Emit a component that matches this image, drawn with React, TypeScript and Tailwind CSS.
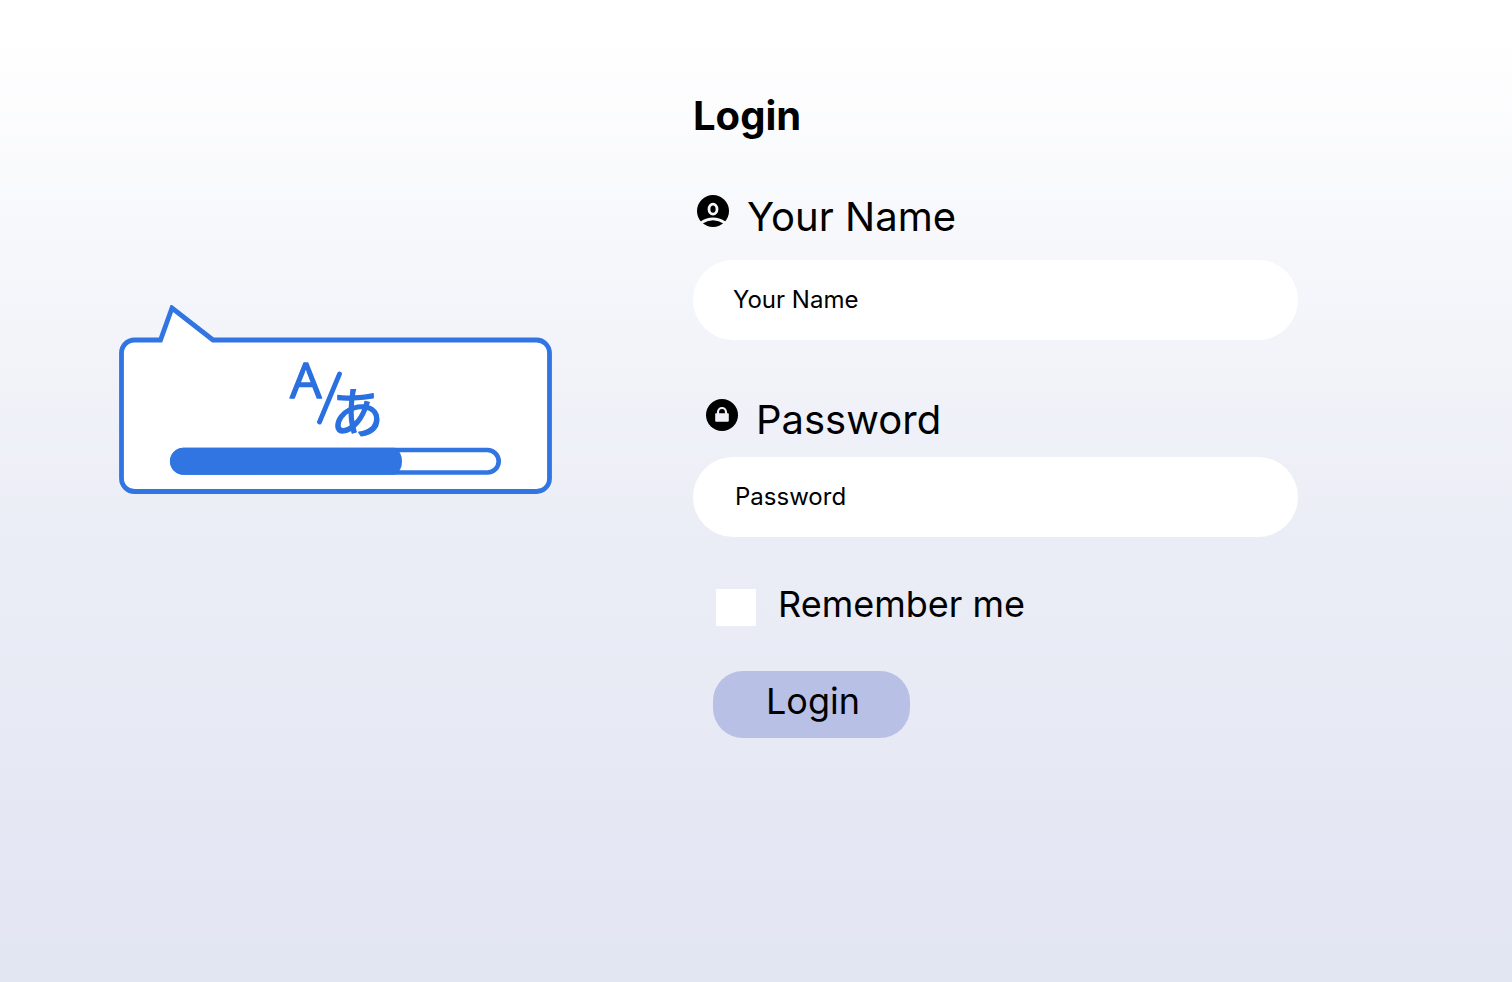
function SpeechBubble() {
  return (
    <svg viewBox="0 0 433 190" className="block w-full" role="img" aria-label="Language selection progress">
      <path
        d="M15.500 35 H41.500 L53 3 L94 35 H417 A13 13 0 0 1 430.500 48 V173.500 A13 13 0 0 1 417 186.500 H15.500 A13 13 0 0 1 2.500 173.500 V48 A13 13 0 0 1 15.500 35 Z"
        fill="#fff"
        stroke="#3075e2"
        strokeWidth="4.800"
      />
      <text
        x="171"
        y="93"
        fontSize="50"
        fill="#2a70e0"
        stroke="#2a70e0"
        strokeWidth="1.400"
        strokeLinejoin="round"
        className="font-['Open_Sans',sans-serif]"
      >
        A
      </text>
      <path d="M220.500 69 L200.500 117" stroke="#2a70e0" strokeWidth="4.800" strokeLinecap="round" />
      <text
        x="211"
        y="128"
        fontSize="54"
        fill="#2a70e0"
        stroke="#2a70e0"
        strokeWidth="1.400"
        strokeLinejoin="round"
        className="font-['Noto_Sans_CJK_JP',sans-serif]"
      >
        あ
      </text>
      <rect x="53.300" y="145" width="326.400" height="22.500" rx="11.250" fill="#fff" stroke="#3075e2" strokeWidth="4.600" />
      <path d="M64.500 142.700 H276 Q283 147 283 156.200 Q283 165.500 276 169.800 H64.500 A13.500 13.500 0 0 1 64.500 142.700 Z" fill="#3075e2" />
    </svg>
  );
}

function UserIcon() {
  return (
    <svg viewBox="0 0 32 32" className="mt-0.5 size-8 shrink-0" aria-hidden="true">
      <circle cx="16" cy="16" r="16" />
      <ellipse cx="16" cy="14.200" rx="4" ry="5" fill="none" stroke="#f7f8fc" strokeWidth="2.800" />
      <path d="M4 27.800 Q16 20 28 27.800" fill="none" stroke="#f7f8fc" strokeWidth="2.800" />
    </svg>
  );
}

function LockIcon() {
  return (
    <svg viewBox="0 0 32 32" className="mt-[3px] size-8 shrink-0" aria-hidden="true">
      <circle cx="16" cy="16" r="16" />
      <path d="M12 15 V13 A4 4 0 0 1 20 13 V15" fill="none" stroke="#f0f1f8" strokeWidth="2.200" />
      <rect x="9.200" y="14.200" width="13.600" height="8.600" rx="1" fill="#f0f1f8" />
    </svg>
  );
}

export default function App() {
  return (
    <main className="grid min-h-screen grid-cols-[433fr_605fr] items-start gap-[141px] bg-linear-to-b from-white from-3% via-[#ebedf6] via-55% to-[#e2e5f2] pr-[214px] pl-[119px] font-['Inter',sans-serif] text-black">
      <div className="pt-[305px]">
        <SpeechBubble />
      </div>
      <form className="flex flex-col items-start pt-[92px]" onSubmit={(e) => e.preventDefault()}>
        <h1 className="text-[40px] leading-[48px] font-bold">Login</h1>

        <label htmlFor="name" className="mt-[53px] flex items-start gap-[18px] pl-1 text-[40px] leading-[48px]">
          <UserIcon />
          Your Name
        </label>
        <input
          id="name"
          type="text"
          placeholder="Your Name"
          className="mt-[19px] h-20 w-full rounded-full bg-white px-10 pb-0.5 text-2xl placeholder:text-black"
        />

        <label htmlFor="password" className="mt-14 flex items-start gap-[18px] pl-[13px] text-[40px] leading-[48px]">
          <LockIcon />
          Password
        </label>
        <input
          id="password"
          type="password"
          placeholder="Password"
          className="mt-[13px] h-20 w-full rounded-full bg-white px-[42px] pb-0.5 text-2xl placeholder:text-black"
        />

        <div className="mt-[45px] flex items-end gap-[22px] pl-[23px]">
          <input id="remember" type="checkbox" className="h-[37px] w-10 appearance-none bg-white checked:bg-[#3075e2]" />
          <label htmlFor="remember" className="text-4xl leading-[44px]">
            Remember me
          </label>
        </div>

        <button type="submit" className="mt-[45px] ml-5 rounded-[30px] bg-[#b8c0e5] pt-2 pr-[50px] pb-[15px] pl-[53px] text-4xl leading-[44px]">
          Login
        </button>
      </form>
    </main>
  );
}
